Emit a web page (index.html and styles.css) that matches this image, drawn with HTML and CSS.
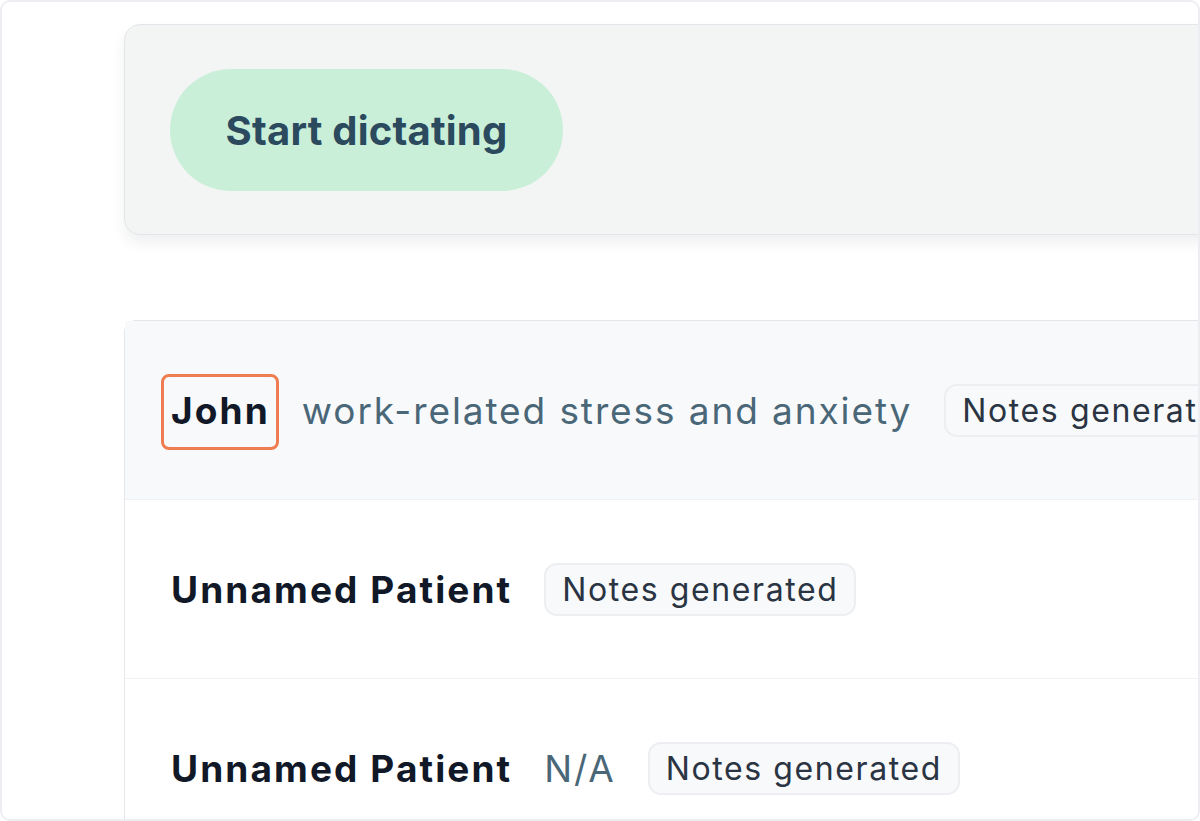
FILE: index.html
```html
<!DOCTYPE html>
<html lang="en">
<head>
<meta charset="utf-8">
<title>Dictation</title>
<link rel="stylesheet" href="styles.css">
</head>
<body>
<div class="frame">
  <div class="content">
    <section class="dictate-card">
      <button class="start-btn">Start dictating</button>
    </section>
    <section class="session-list">
      <div class="row row-active">
        <span class="name name-highlight">John</span>
        <span class="desc">work-related stress and anxiety</span>
        <span class="badge">Notes generated</span>
      </div>
      <div class="row">
        <span class="name">Unnamed Patient</span>
        <span class="badge">Notes generated</span>
      </div>
      <div class="row">
        <span class="name">Unnamed Patient</span>
        <span class="desc">N/A</span>
        <span class="badge">Notes generated</span>
      </div>
    </section>
  </div>
</div>
</body>
</html>
```
FILE: styles.css
```css
* { box-sizing: border-box; }
html, body { margin: 0; padding: 0; background: #ffffff; }
body { font-family: Inter, "Noto Sans", sans-serif; }

.frame {
  width: 1200px;
  height: 821px;
  border: 2px solid #eeeef2;
  border-radius: 10px;
  overflow: hidden;
  background: #ffffff;
  padding: 22px 0 0 122px;
}

.content {
  width: 1400px;
  display: flex;
  flex-direction: column;
  gap: 85px;
}

.dictate-card {
  height: 211px;
  background: #f3f4f4;
  border: 1px solid #e4e5ea;
  border-radius: 16px;
  box-shadow: 0 8px 14px rgba(30, 40, 60, 0.07);
  padding: 44px 0 0 45px;
}

.start-btn {
  width: 393px;
  height: 122px;
  border: none;
  border-radius: 61px;
  background: #c9efd9;
  color: #2b4a5e;
  font-family: Inter, "Noto Sans", sans-serif;
  font-weight: 700;
  font-size: 40px;
  letter-spacing: 0.2px;
  padding: 0;
}

.session-list {
  border: 1px solid #e6e7eb;
  border-right: none;
  border-radius: 12px 0 0 0;
  background: #ffffff;
}

.row {
  height: 179px;
  display: flex;
  align-items: center;
  gap: 32px;
  padding-left: 46px;
  border-bottom: 1px solid #f0f1f4;
}
.row-active { background: #f8f9fb; }

.name {
  font-weight: 700;
  font-size: 37px;
  color: #111827;
  letter-spacing: 2.1px;
}
.name-highlight {
  position: relative;
}
.name-highlight::after {
  content: "";
  position: absolute;
  left: -10px;
  right: -9px;
  top: -14px;
  bottom: -17px;
  border: 3px solid #ef7d52;
  border-radius: 8px;
}

.desc {
  font-weight: 400;
  font-size: 37px;
  color: #4a6778;
  letter-spacing: 1.9px;
}

.badge {
  height: 53px;
  display: inline-flex;
  align-items: center;
  padding: 0 16px;
  border: 2px solid #eceef1;
  border-radius: 13px;
  background: #f8f9fb;
  color: #2a3442;
  font-size: 32px;
  font-weight: 400;
  letter-spacing: 1.6px;
}
```
